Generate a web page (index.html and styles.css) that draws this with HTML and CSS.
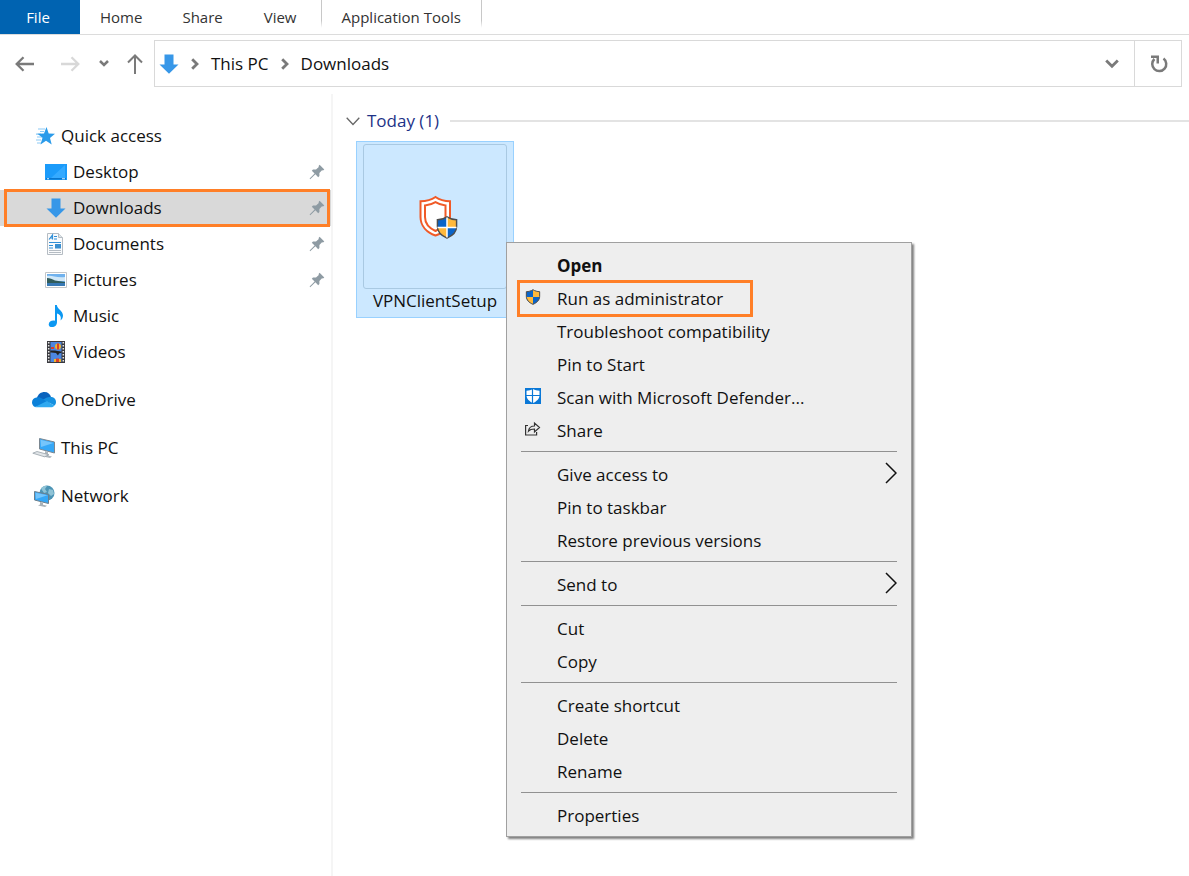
FILE: index.html
```html
<!DOCTYPE html>
<html lang="en">
<head>
    <meta charset="UTF-8">
    <meta name="viewport" content="width=device-width, initial-scale=1.0">
    <title>Downloads</title>
    <link rel="stylesheet" href="styles.css">
</head>
<body>
    <!-- shared icons -->
    <svg class="defs" width="0" height="0" aria-hidden="true">
        <symbol id="pin" viewBox="0 0 16 16">
            <path fill="#8e9ba3" d="M10.6 0.8 L15.3 5.4 L14 6.4 L13 6.2 L10.4 9 L10.4 12 L9.2 13.2 L6.4 10.3 L1.2 15.2 L0.6 14.6 L5.6 9.4 L2.8 6.7 L4 5.6 L7 5.5 L9.8 3 L9.6 1.9 Z"/>
        </symbol>
        <symbol id="down" viewBox="0 0 20 20">
            <path fill="#3797e8" d="M5.5 0.5h9v10h5L10 19.8 0.5 10.500h5z"/>
        </symbol>
        <symbol id="shield" viewBox="0 0 22 24">
            <path fill="#0a64c8" d="M11 1C8 3 4.500 4 1 4v7c0 5.500 4 9.500 10 12z"/>
            <path fill="#ffb93c" d="M11 1c3 2 6.500 3 10 3v7c0 5.500-4 9.500-10 12z"/>
            <path fill="#ffb93c" d="M1 12h10v11C5.500 20.500 1.500 17 1 12z"/>
            <path fill="#0a64c8" d="M21 12H11v11c5.500-2.500 9.500-6 10-11z"/>
            <path fill="none" stroke="#4d4d4d" stroke-width="1.500" d="M11 1C8 3 4.500 4 1 4v7c0 5.500 4 9.500 10 12 6-2.500 10-6.500 10-12V4c-3.500 0-7-1-10-3z"/>
        </symbol>
        <symbol id="crumb" viewBox="0 0 8 12">
            <path fill="none" stroke="#7a7a7a" stroke-width="2.800" d="M1.200 1.200 6 6l-4.800 4.800"/>
        </symbol>
        <symbol id="submenu" viewBox="0 0 12 22">
            <path fill="none" stroke="#111" stroke-width="1.500" d="M1 1l10 10L1 21"/>
        </symbol>
    </svg>

    <nav class="tabs">
        <button class="tab file">File</button>
        <button class="tab">Home</button>
        <button class="tab">Share</button>
        <button class="tab view">View</button>
        <button class="tab tools">Application Tools</button>
    </nav>

    <header class="toolbar">
        <div class="history">
            <button aria-label="Back"><svg width="20" height="16" viewBox="0 0 20 16" fill="none" stroke="#7a7a7a" stroke-width="2.300"><path d="M19 8H2M8.500 1.200 1.700 8l6.800 6.800"/></svg></button>
            <button aria-label="Forward"><svg width="20" height="16" viewBox="0 0 20 16" fill="none" stroke="#d8d8d8" stroke-width="2.300"><path d="M1 8h17M11.500 1.200 18.300 8l-6.800 6.800"/></svg></button>
            <button aria-label="Recent locations"><svg width="10" height="7" viewBox="0 0 10 7" fill="none" stroke="#7a7a7a" stroke-width="2.500"><path d="M1 1l4 4 4-4"/></svg></button>
            <button aria-label="Up"><svg width="16" height="20" viewBox="0 0 16 20" fill="none" stroke="#7a7a7a" stroke-width="2"><path d="M8 20V2M1 8.500l7-7 7 7"/></svg></button>
        </div>
        <div class="address">
            <svg width="20" height="20"><use href="#down"/></svg>
            <svg class="sep" width="8" height="12"><use href="#crumb"/></svg>
            <a href="#">This PC</a>
            <svg class="sep" width="8" height="12"><use href="#crumb"/></svg>
            <a href="#">Downloads</a>
            <button class="expand" aria-label="Previous locations"><svg width="14" height="10" viewBox="0 0 14 10" fill="none" stroke="#7a7a7a" stroke-width="2.800"><path d="M1.200 1.500 7 7.300l5.800-5.800"/></svg></button>
            <button class="refresh" aria-label="Refresh"><svg width="18" height="18" viewBox="0 0 18 18" fill="none" stroke="#7a7a7a" stroke-width="2.500"><path d="M13.500 3.500A7 7 0 1 1 4.400 4"/><path fill="#7a7a7a" stroke="none" d="M1 .5h8v8H6.500V3H1z"/></svg></button>
        </div>
    </header>

    <div class="content">
        <aside class="sidebar">
            <ul>
                <li><a class="root" href="#">
                    <svg width="24" height="22" viewBox="0 0 24 22"><path stroke="#8ccaf5" stroke-width="1.200" d="M6 4h7M8 6.500h4M4 9.200h5M5 12h5M4 15h5M5 18h4"/><path fill="#2b9bea" d="M14.500 2l2.200 6.500 6.300.3-5 4.200 1.700 6.500-5.700-3.800-5.500 3.900 2-6.800L5.500 8.800l6.500-.2z"/></svg>
                    Quick access</a></li>
                <li><a href="#">
                    <svg width="22" height="22" viewBox="0 0 22 22"><path fill="#1b9bfa" d="M0 3h22v16H0z"/><path fill="#35aaff" d="M20 4v13H6z"/><path fill="#0876ce" d="M1 17h20v1.500H1z"/><path fill="#d8efff" d="M2 17.300h2v1H2zM17 17.300h3v1h-3z"/></svg>
                    Desktop<svg class="pin" width="16" height="16"><use href="#pin"/></svg></a></li>
                <li class="selected"><a href="#">
                    <svg width="22" height="20"><use href="#down"/></svg>
                    Downloads<svg class="pin" width="16" height="16"><use href="#pin"/></svg></a></li>
                <li><a href="#">
                    <svg width="22" height="22" viewBox="0 0 22 22"><path fill="#fafbfc" stroke="#b5bcc3" d="M2.500.5h11l4 4v17h-15z"/><path fill="#dfe5e9" stroke="#b5bcc3" d="M13.500.5v4h4"/><path stroke="#2f8fd8" stroke-width="1.200" fill="none" d="M4 6.500 7.500 2v4.500M5.500 5h2M9 3.500h3M9 6h3M4 9.500h12M4 12.500h4M4 15h4"/><path fill="#3a8fd0" d="M10 11h6v4.500h-6z"/><path stroke="#b5bcc3" d="M4 17.500h12M4 19.500h12"/></svg>
                    Documents<svg class="pin" width="16" height="16"><use href="#pin"/></svg></a></li>
                <li><a href="#">
                    <svg width="22" height="22" viewBox="0 0 22 22"><path fill="#fff" stroke="#c3c6c9" d="M.5 3.500h21v15H.5z"/><path fill="#70b2ee" d="M2 5h18v12H2z"/><path fill="#cfe7f8" d="M2 7c5-1 9 2 18 1v4H2z"/><path fill="#315c5b" d="M2 9c3 0 5 1 8 2.500l10 1.500v1.500H2z"/><path fill="#3879b5" d="M2 14h18v3H2z"/></svg>
                    Pictures<svg class="pin" width="16" height="16"><use href="#pin"/></svg></a></li>
                <li><a href="#">
                    <svg width="22" height="22" viewBox="0 0 22 22"><path fill="#0c98f2" d="M10 0h1.800c.5 4 6.200 6 6.200 10.500 0 2-1 4-2.500 5 .8-3 .5-5.500-3.500-7V17c0 3-2 5-5 5-2 0-3.300-1-3.300-2.600C3.700 16.500 7 15 10 15.800z"/></svg>
                    Music</a></li>
                <li><a href="#">
                    <svg width="22" height="22" viewBox="0 0 22 22"><path fill="#3a3a3f" d="M2 0h18v22H2z"/><path fill="#4c86e0" d="M5.500 1h11v9.500h-11zM5.500 11.500h11V21h-11z"/><path stroke="#e8e8e8" stroke-width="1.500" stroke-dasharray="1.500 1.500" d="M3.700 1v20M18.300 1v20"/><circle cx="13" cy="5.500" r="3" fill="#efb52a"/><path fill="#d93d2b" d="M12 2.500h2v6h-2zM6 6h3v2H6zM11 17.500h3V21h-3z"/><path fill="#efb52a" d="M9 18h2v3H9zM14 18h2v3h-2z"/><path fill="#222" d="M5.500 9.500H10l5 1 1.500 1-2.500 1-1 2-2-2.500-5.500-1z"/></svg>
                    Videos</a></li>
            </ul>
            <ul>
                <li><a class="root" href="#">
                    <svg width="24" height="22" viewBox="0 0 24 22"><path fill="#0a63bd" d="M5 9c1-4 4-6 7.500-6 3.300 0 5.700 2 6.500 5L12 13z"/><path fill="#0b80d8" d="M4.500 8.500c2.500-.8 4 0 6 1.200L18 14 3 18c-2-1-3-2.700-3-4.500 0-3 2-4.700 4.500-5z"/><path fill="#1590e0" d="M19 8c3 0 5 2.200 5 5 0 1.500-.5 2.700-1.500 3.500L11 10.500C13.500 9 16 7.500 19 8z"/><path fill="#2fa9f0" d="M3 18l11.500-5.800L22.500 16.500c-.8 1-2 1.800-3.500 1.800H5c-.8 0-1.500 0-2-.3z"/></svg>
                    OneDrive</a></li>
            </ul>
            <ul>
                <li><a class="root" href="#">
                    <svg width="24" height="22" viewBox="0 0 24 22"><path fill="#35a7f6" stroke="#7b8791" d="M7.500 1.500 22.500 5v11L7.500 12z"/><path fill="#75c5fb" d="M8.500 2.800 21.500 6 9 10z"/><path fill="#aeb6bc" d="M13 14l3 .8v3.700l4 1-2 1.500-7-1.500 2-1z"/><path fill="#e1e5e8" stroke="#98a2aa" stroke-width=".8" d="M.8 16.200 5 14.500l12 3.300-4.500 2z"/></svg>
                    This PC</a></li>
            </ul>
            <ul>
                <li><a class="root" href="#">
                    <svg width="24" height="22" viewBox="0 0 24 22"><circle cx="15" cy="8" r="7.500" fill="#4c94b5"/><path fill="#8fc3d6" d="M9 3.500C11 1 14 .5 15 1l-2 3 2 3-3 1zM17 4l4 1 1 4-3 2-3-3z"/><path fill="#35a7f6" stroke="#6d7f8c" d="M2.500 6.500 16.500 9.500v9l-14-3.500z"/><path fill="#75c5fb" d="M3.500 7.800 15.500 10.300 4 14z"/><path fill="#a9b1b7" d="M8 17l3 .7v2l4 1-2 1.300-7-1.500 2-1z"/></svg>
                    Network</a></li>
            </ul>
        </aside>

        <main class="files">
            <h2 class="group">
                <svg width="14" height="9" viewBox="0 0 14 9" fill="none" stroke="#666" stroke-width="1.300"><path d="M.7.800 7 7.500 13.300.800"/></svg>
                Today (1)
            </h2>
            <button class="tile">
                <span class="thumb">
                    <svg width="40" height="44" viewBox="0 0 40 44"><path fill="#fff" stroke="#f05a28" stroke-width="2" d="M16.500 2C13 4.500 7 6.300 1.500 6.300V22c0 9 6.500 15.500 15 18.500 8.500-3 14.500-9.500 14.500-18.500V6.300C25.500 6.300 20 4.500 16.500 2z"/><path fill="none" stroke="#f05a28" stroke-width="2" d="M16.500 7.200C13.500 9 10 10.300 6 10.500V22c0 6.500 4 11 10.500 14 6-3 10-7.500 10-14V10.500C23 10.300 19.500 9 16.500 7.200z"/><use href="#shield" x="17" y="21" width="22" height="23"/><path stroke="#fff" stroke-width="1.500" d="M28 22.500v20M18.500 32.500h19"/></svg>
                </span>
                VPNClientSetup
            </button>

            <div class="menu">
                <ul>
                    <li><button><b>Open</b></button></li>
                    <li class="marked"><button><svg width="16" height="16"><use href="#shield"/></svg>Run as administrator</button></li>
                    <li><button>Troubleshoot compatibility</button></li>
                    <li><button>Pin to Start</button></li>
                    <li><button><svg width="16" height="16" viewBox="0 0 16 16"><path fill="#0a78d7" d="M0 0h16v16H0z"/><path fill="#fff" d="M8 1c2 1.300 4 1.700 6.500 1.700V7c0 4-3 6.500-6.500 8-3.500-1.500-6.500-4-6.500-8V2.700C4 2.700 6 2.300 8 1z"/><path stroke="#0a78d7" stroke-width="1.200" d="M7.500 1v14M1 7.500h14"/></svg>Scan with Microsoft Defender...</button></li>
                    <li><button><svg width="16" height="16" viewBox="0 0 16 16" fill="none" stroke="#333" stroke-width="1.200"><path d="M3 4.500H.6v9.500h11v-3M3.500 10c.5-3.500 2.500-5 6-5V2l5 4.500-5 4.500V8c-2.500 0-4.500.3-6 2z"/></svg>Share</button></li>
                </ul>
                <ul>
                    <li><button>Give access to<svg class="more" width="12" height="22"><use href="#submenu"/></svg></button></li>
                    <li><button>Pin to taskbar</button></li>
                    <li><button>Restore previous versions</button></li>
                </ul>
                <ul>
                    <li><button>Send to<svg class="more" width="12" height="22"><use href="#submenu"/></svg></button></li>
                </ul>
                <ul>
                    <li><button>Cut</button></li>
                    <li><button>Copy</button></li>
                </ul>
                <ul>
                    <li><button>Create shortcut</button></li>
                    <li><button>Delete</button></li>
                    <li><button>Rename</button></li>
                </ul>
                <ul>
                    <li><button>Properties</button></li>
                </ul>
            </div>
        </main>
    </div>
</body>
</html>
```
FILE: styles.css
```css
*, *::after { box-sizing: border-box; }
body { margin: 0; min-height: 100vh; display: flex; flex-direction: column; background: #fff; color: #111; font: 17px/24px "Open Sans", "Noto Sans", sans-serif; }
button { font: inherit; color: inherit; background: none; border: none; padding: 0; cursor: pointer; }
a { color: inherit; text-decoration: none; }
ul { list-style: none; margin: 0; padding: 0; }
svg { display: block; flex: none; }
.defs { position: absolute; }

/* ribbon tabs */
.tabs { display: flex; height: 35px; border-bottom: 1px solid #dcdcdc; font-size: 15px; color: #333; }
.tab { padding: 0 20px; height: 34px; }
.file { width: 80px; padding-right: 24px; background: #0063b1; color: #fff; }
.view, .tools { border-right: 1px solid; border-image: linear-gradient(#c8c8c8 60%, #fff 80%) 1; }
.view { padding: 0 24px 0 21px; }

/* navigation buttons and address */
.toolbar { display: flex; align-items: center; padding: 5px 7px 6px 15px; }
.history { display: flex; align-items: center; width: 139px; }
.history button { margin-right: 25px; }
.history button:nth-child(2) { margin-right: 19px; }
.history button:nth-child(3) { margin-right: 18px; }
.history button:last-child { margin: 0; }
.address { flex: 1; display: flex; align-items: center; height: 47px; padding-left: 4px; border: 1px solid #d9d9d9; }
.sep { margin: 0 12px; }
.expand { margin-left: auto; padding: 0 15px; }
.refresh { align-self: stretch; padding: 0 13px 0 15px; border-left: 1px solid #d9d9d9; }

.content { flex: 1; display: flex; padding-top: 1px; }

/* folder tree */
.sidebar { width: 333px; padding-top: 24px; border-right: 2px solid #f5f5f5; }
.sidebar ul { margin-bottom: 12px; }
.sidebar a { display: flex; align-items: center; gap: 6px; height: 36px; padding: 0 6px 0 45px; }
.sidebar a.root { padding-left: 32px; gap: 5px; }
.pin { margin-left: auto; }
.selected { position: relative; background: #d9d9d9; }
.selected::after { content: ""; position: absolute; inset: -1px 1px -1px 4px; border: 3px solid #ff7f27; }

/* file list */
.files { flex: 1; position: relative; padding: 15px 0 0 13px; }
.group { display: flex; align-items: center; gap: 7px; margin: 0 0 8px; height: 24px; font-size: 17px; font-weight: normal; color: #1e3287; }
.group::after { content: ""; flex: 1; height: 2px; margin-left: 4px; background: #e3e3e3; }
.tile { display: flex; flex-direction: column; width: 158px; height: 177px; margin-left: 10px; padding: 2px 6px; border: 1px solid #99d1ff; background: #cce8ff; align-items: center; }
.thumb { display: flex; align-items: center; justify-content: center; align-self: stretch; height: 145px; padding-left: 7px; border: 1px solid #a9c9e2; border-radius: 3px; }

/* context menu */
.menu { position: absolute; left: 173px; top: 148px; width: 406px; padding: 6px 14px 4px 10px; background: #eee; border: 1px solid #a0a0a0; box-shadow: 2px 2px 2px #808080; }
.menu ul + ul { margin: 4px 0 0 4px; padding-top: 6px; border-top: 1px solid #919191; }
.menu button { display: flex; align-items: center; width: 100%; height: 33px; padding-left: 40px; }
.menu ul + ul button { padding-left: 36px; }
.menu svg { margin: 0 16px 4px -32px; }
.menu svg.more { margin: 0 0 4px auto; }
.marked { position: relative; }
.marked::after { content: ""; position: absolute; inset: -2px auto -2px 0; width: 236px; border: 3px solid #ff7f27; }
```
